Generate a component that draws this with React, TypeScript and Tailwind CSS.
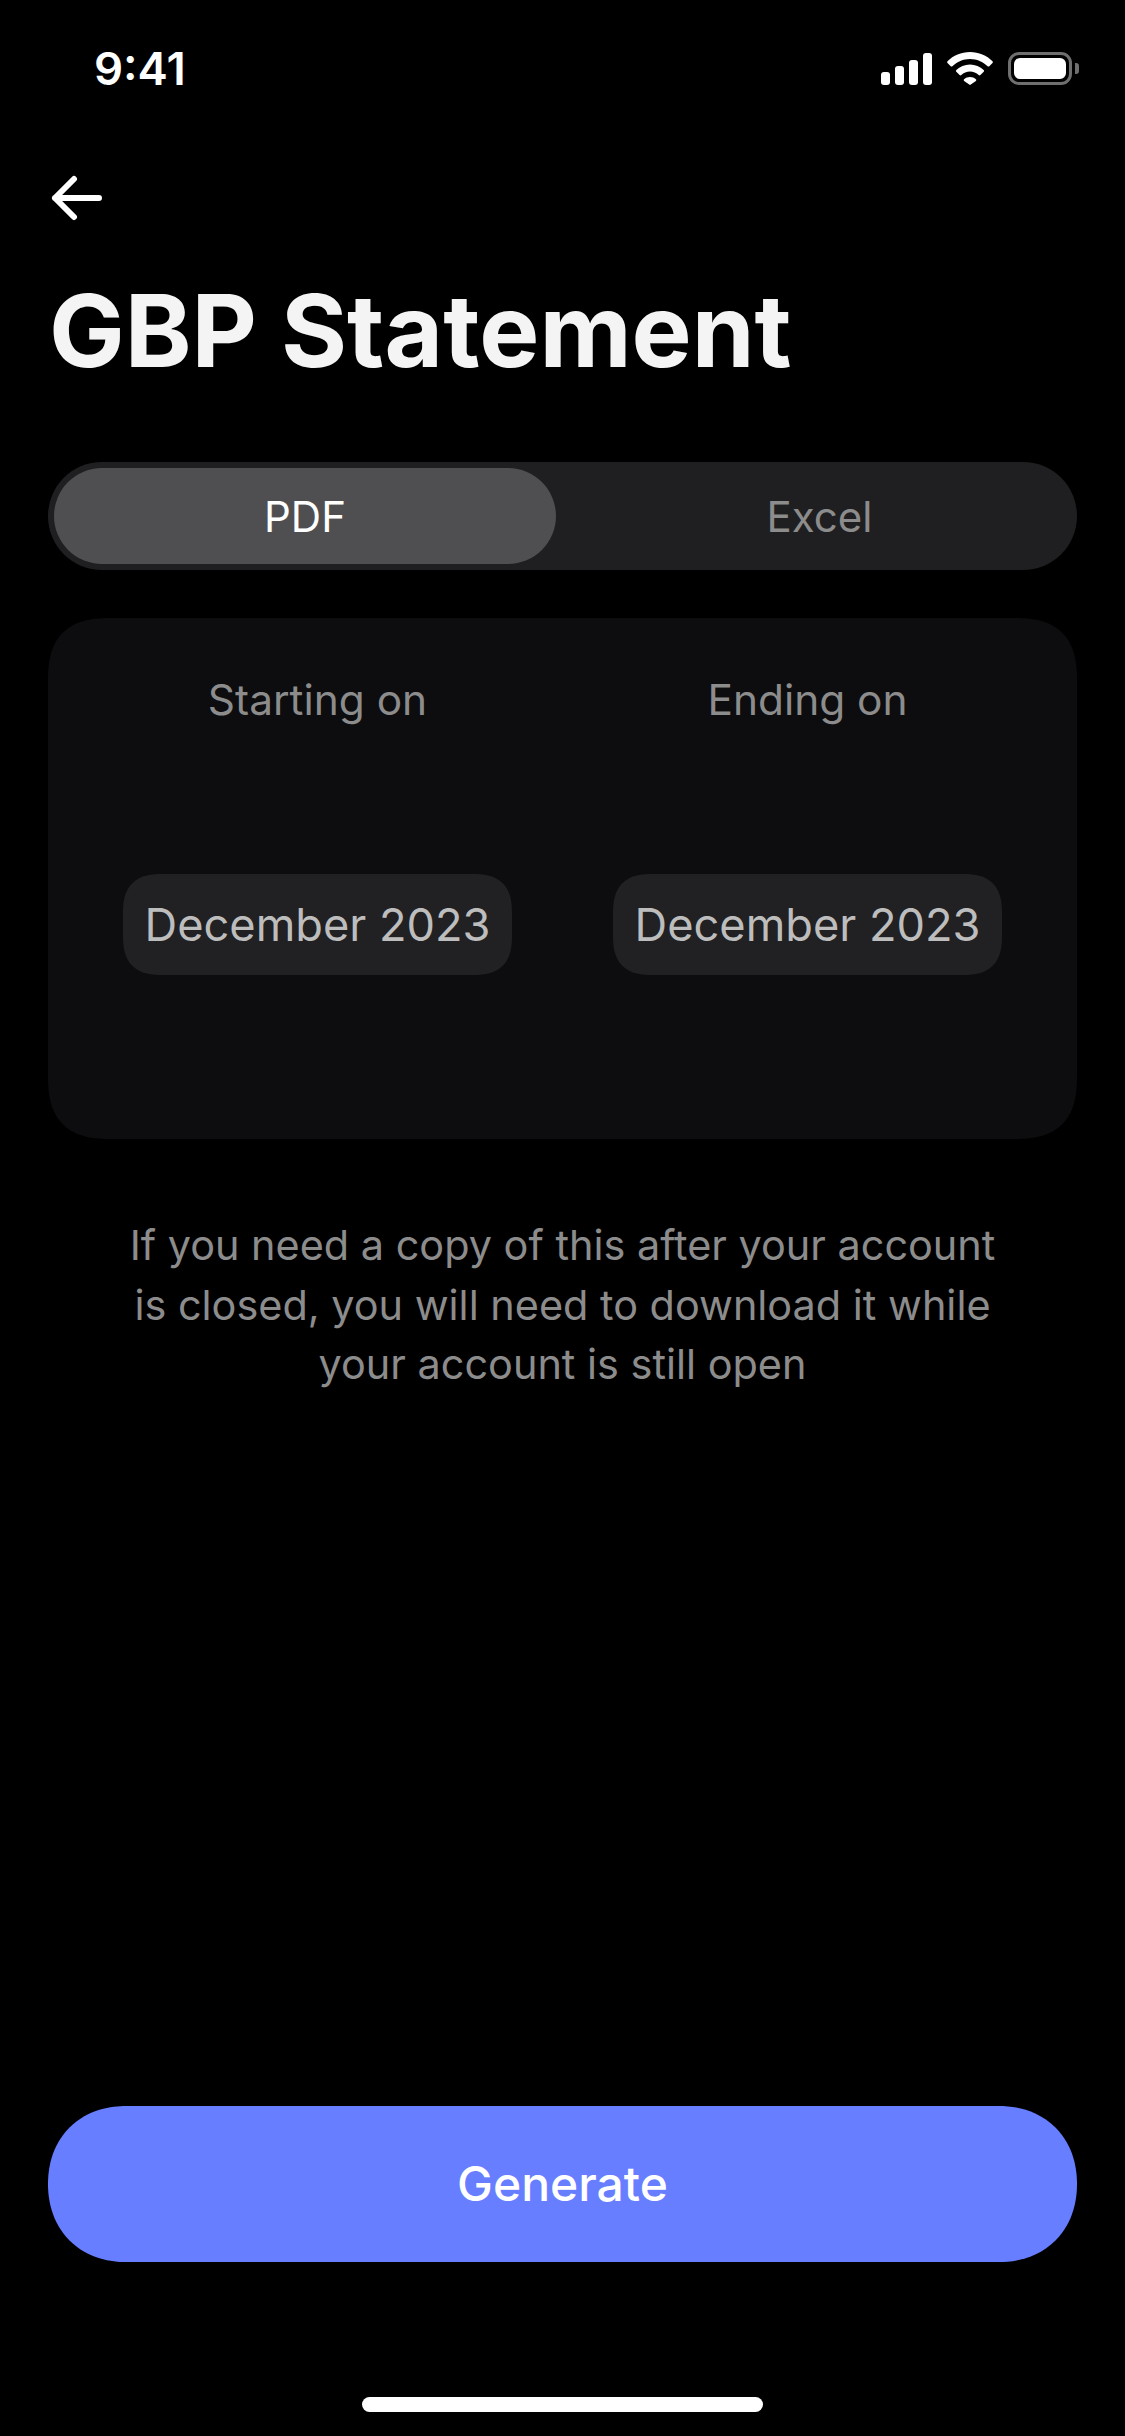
import { ReactNode } from "react";

const months = [
  { label: "Starting on", value: "December 2023" },
  { label: "Ending on", value: "December 2023" },
];

function StatusIcons() {
  return (
    <div className="flex items-center">
      {/* signal bars */}
      <div className="flex items-end gap-[5px] h-[32px]">
        <div className="w-[9px] h-[13px] rounded-[3px] bg-white" />
        <div className="w-[9px] h-[19px] rounded-[3px] bg-white" />
        <div className="w-[9px] h-[25px] rounded-[3px] bg-white" />
        <div className="w-[9px] h-[32px] rounded-[3px] bg-white" />
      </div>
      {/* wifi */}
      <svg className="ml-[15px]" width="46" height="33" viewBox="0 0 46 33" fill="none">
        <path d="M23 0C14.2 0 6.3 3.5 0.5 9.2c-.5.5-.5 1.2 0 1.7l3.2 3.3c.5.5 1.2.5 1.7 0C10 9.8 16.200 7 23 7s13 2.800 17.600 7.200c.5.5 1.200.5 1.700 0l3.200-3.300c.5-.5.5-1.200 0-1.700C39.700 3.500 31.800 0 23 0Z" fill="#fff" />
        <path d="M23 12.500c-5.300 0-10.100 2.100-13.700 5.500-.5.5-.5 1.200 0 1.700l3.300 3.300c.5.5 1.200.5 1.700 0 2.300-2.100 5.400-3.400 8.700-3.400s6.400 1.300 8.700 3.400c.5.500 1.200.5 1.700 0l3.300-3.300c.5-.5.5-1.200 0-1.700-3.600-3.400-8.400-5.500-13.700-5.500Z" fill="#fff" />
        <path d="M23 25c-2.300 0-4.300.9-5.900 2.300-.5.4-.5 1.100 0 1.600l5.100 3.700c.5.4 1.100.4 1.600 0l5.100-3.700c.5-.5.5-1.200 0-1.600C27.300 25.900 25.300 25 23 25Z" fill="#fff" />
      </svg>
      {/* battery */}
      <div className="ml-[15px] flex items-center">
        <div className="w-[64px] h-[33px] rounded-[11px] border-[3px] border-[#6f6f6f] p-[3px]">
          <div className="w-full h-full rounded-[6px] bg-white" />
        </div>
        <div className="ml-[3px] w-[4px] h-[11px] rounded-r-[3px] bg-[#6f6f6f]" />
      </div>
    </div>
  );
}

function Segment({ active, children }: { active?: boolean; children: ReactNode }) {
  return (
    <div
      className={`flex items-center justify-center h-[96px] rounded-[48px] text-[42px] ${
        active ? "w-[502px] bg-[#4f4f51] text-white" : "flex-1 pl-[12px] text-[#8c8c8c]"
      }`}
    >
      {children}
    </div>
  );
}

export default function App() {
  return (
    <div
      className="w-[1125px] h-[2436px] bg-black flex flex-col"
      style={{ fontFamily: "Inter, 'Noto Sans', sans-serif" }}
    >
      {/* Status bar */}
      <div className="flex items-center justify-between h-[33px] mt-[52px] pl-[94px] pr-[46px]">
        <span className="text-[45.500px] leading-[33px] font-semibold text-white">9:41</span>
        <StatusIcons />
      </div>

      {/* Back */}
      <div className="mt-[90px] pl-[50px]">
        <svg width="56" height="46" viewBox="0 0 56 46" fill="none" stroke="#fff" strokeWidth="6" strokeLinecap="round" strokeLinejoin="round">
          <path d="M5 23h44M24 4 5 23l19 19" />
        </svg>
      </div>

      <h1 className="mt-[51px] pl-[49px] text-[101px] leading-[116px] font-bold text-[#f4f4f4]">GBP Statement</h1>

      <div className="mx-[48px] mt-[74px] flex flex-col flex-1">
        {/* Format switch */}
        <div className="flex items-center h-[108px] p-[6px] rounded-[54px] bg-[#1f1f21]">
          <Segment active>PDF</Segment>
          <Segment>Excel</Segment>
        </div>

        {/* Date range */}
        <div className="mt-[48px] h-[521px] pt-[52px] px-[75px] rounded-[64px] [corner-shape:superellipse(1.4)] bg-[#0d0d0f] flex justify-between">
          {months.map((m) => (
            <div key={m.label} className="w-[389px] flex flex-col items-center">
              <span className="text-[42.400px] leading-[60px] text-[#8c8c8c]">{m.label}</span>
              <div className="mt-[144px] w-full h-[101px] rounded-[40px] [corner-shape:superellipse(1.4)] bg-[#212123] flex items-center justify-center text-[45.200px] text-[#bdbdbd]">
                {m.value}
              </div>
            </div>
          ))}
        </div>

        <p className="mt-[77px] text-center text-[41.400px] leading-[59.500px] text-[#8c8c8c]">
          If you need a copy of this after your account
          <br />
          is closed, you will need to download it while
          <br />
          your account is still open
        </p>

        <button className="mt-auto h-[156px] rounded-[78px] [corner-shape:superellipse(1.1)] bg-[#667eff] text-white text-[48px] font-medium">
          Generate
        </button>

        {/* Home indicator */}
        <div className="mt-[135px] mb-[24px] mx-auto w-[401px] h-[15px] rounded-full bg-white" />
      </div>
    </div>
  );
}
